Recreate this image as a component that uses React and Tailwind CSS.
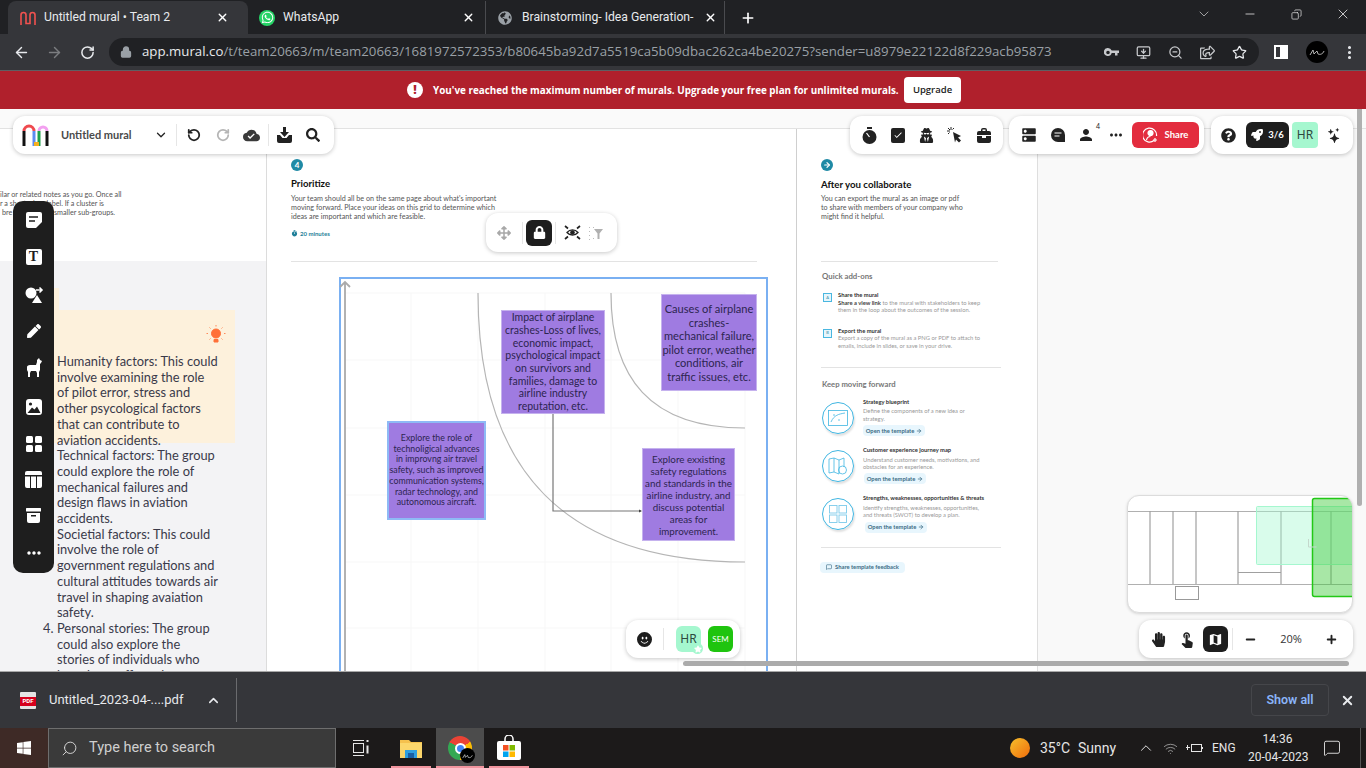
import React from "react";
import { ArrowLeft, ArrowRight, RotateCw, RotateCcw, Lock, MonitorDown, ZoomOut, Star, MoreVertical, X, Plus, ChevronDown, ChevronUp, Minus, Search, Copy, Wifi, MessageSquare, ArrowRight as Arw } from "lucide-react";
import { FaWhatsapp, FaGlobeAmericas, FaWindows, FaUserSecret, FaRocket, FaHandPaper, FaLock, FaArrowsAlt, FaPen, FaSearch, FaQuestionCircle, FaStar, FaRegShareSquare } from "react-icons/fa";
import { MdCloudDone, MdTimer, MdDns, MdPerson, MdMoreHoriz, MdMap, MdTouchApp, MdCheck } from "react-icons/md";
import { BsStars, BsEmojiSmileFill } from "react-icons/bs";

const ui = "font-['Open_Sans','Noto_Sans',sans-serif]";
const tab = "font-['Roboto','Open_Sans',sans-serif]";
const mural = "font-['Lato','Open_Sans',sans-serif]";

const factorLines = [
  "Humanity factors: This could",
  "involve examining the role",
  "of pilot error, stress and",
  "other psycological factors",
  "that can contribute to",
  "aviation accidents.",
  "Technical factors: The group",
  "could explore the role of",
  "mechanical failures and",
  "design flaws in aviation",
  "accidents.",
  "Societial factors: This could",
  "involve the role of",
  "government regulations and",
  "cultural attitudes towards air",
  "travel in shaping avaiation",
  "safety.",
];

function MuralTab() {
  return (
    <svg width="16" height="14" viewBox="0 0 16 14" fill="none" stroke="#f0524f" strokeWidth="1.6">
      <path d="M1 14V4a2.5 2.5 0 0 1 5 0v8.5h4V4a2.5 2.5 0 0 1 5 0v10" />
    </svg>
  );
}

function MuralLogo() {
  return (
    <svg width="27" height="24" viewBox="0 0 27 24" fill="none" strokeWidth="3">
      <path d="M2 23V8" stroke="#111" />
      <path d="M2 8a5 5 0 0 1 10 0" stroke="#ef4a4f" />
      <path d="M12 8v15" stroke="#5c8cf0" />
      <path d="M17 23V8" stroke="#1ea04a" />
      <path d="M17 8a4 4 0 0 1 8 0" stroke="#f3a0f0" />
      <path d="M25 8v15" stroke="#111" />
      <path d="M12 21h5" stroke="#f5b020" strokeWidth="4" />
    </svg>
  );
}

function Bar({ className, children }) {
  return <div className={`absolute flex items-center bg-white rounded-xl shadow-[0_1px_4px_rgba(0,0,0,0.22)] ${className}`}>{children}</div>;
}

function Note({ className, lines }) {
  return (
    <div className={`absolute flex flex-col items-center justify-center text-center whitespace-nowrap bg-[#9f7be1] text-[#2d2550] ${mural} ${className}`}>
      {lines.map((l) => <div key={l}>{l}</div>)}
    </div>
  );
}

function Cell({ className = "", children }) {
  return <div className={`flex items-center justify-center shrink-0 ${className}`}>{children}</div>;
}

function Sep({ className = "" }) {
  return <div className={`w-px h-[22px] bg-[#e6e6e6] shrink-0 ${className}`} />;
}

function Tabs() {
  return (
    <div className={`h-[34px] bg-[#202124] flex items-end text-[12.2px] shrink-0 ${tab}`}>
      <div className="w-2" />
      <div className="w-[240px] h-[33px] bg-[#35363a] rounded-t-lg flex items-center pl-[12px] text-[#e8eaed]">
        <MuralTab />
        <span className="ml-2 w-[172px] truncate">Untitled mural • Team 2</span>
        <X size={13} strokeWidth={2.5} className="text-white" />
      </div>
      <div className="w-[238px] h-[33px] flex items-center pl-[11px] text-[#e8eaed] border-r border-[#4a4b4f]">
        <span className="w-4 h-4 rounded-full bg-[#25d366] flex items-center justify-center"><FaWhatsapp size={13} color="#fff" /></span>
        <span className="ml-2 w-[179px]">WhatsApp</span>
        <X size={13} strokeWidth={2.5} className="text-white" />
      </div>
      <div className="w-[239px] h-[33px] flex items-center pl-[12px] text-[#e8eaed] border-r border-[#4a4b4f]">
        <FaGlobeAmericas size={14} color="#9aa0a6" />
        <span className="ml-[10px] w-[171px] whitespace-nowrap">Brainstorming- Idea Generation-</span>
        <X size={13} strokeWidth={2.5} className="ml-[11px] text-white" />
      </div>
      <div className="ml-[15px] h-[33px] flex items-center"><Plus size={16} strokeWidth={2.5} className="text-white" /></div>
      <div className="flex-1" />
      <div className="h-[34px] flex items-center text-[#e0e0e0] pb-[6px]">
        <ChevronDown size={16} strokeWidth={1} />
        <Minus size={14} strokeWidth={1.4} className="ml-[31px]" />
        <Copy size={11} strokeWidth={1.6} className="ml-[34px] -scale-x-100" />
        <X size={16} strokeWidth={1.3} className="ml-[33px] mr-[15px]" />
      </div>
    </div>
  );
}

function AddressBar() {
  return (
    <div className={`h-[36px] bg-[#35363a] flex items-center shrink-0 text-[#e8eaed] ${ui}`}>
      <ArrowLeft size={17} strokeWidth={2} className="ml-[13px]" />
      <ArrowRight size={17} strokeWidth={2} className="ml-[16px] text-[#7b7d80]" />
      <RotateCw size={15} strokeWidth={2.4} className="ml-[17px]" />
      <div className="ml-[14px] w-[1150px] h-[28px] rounded-full bg-[#202124] flex items-center text-[13.25px]">
        <Lock size={12} strokeWidth={2.6} fill="#9aa0a6" className="ml-[11px] text-[#9aa0a6]" />
        <span className="ml-[10px] whitespace-nowrap w-[950px]">app.mural.co<span className="text-[#9aa0a6]">/t/team20663/m/team20663/1681972572353/b80645ba92d7a5519ca5b09dbac262ca4be20275?sender=u8979e22122d8f229acb95873</span></span>
        <div className="flex items-center text-[#c7c9cc] ml-[12px]">
          <svg width="15" height="9" viewBox="0 0 15 9" fill="#c7c9cc"><path d="M4 0a4 4 0 0 1 3.700 2.500H15V5h-1.500v2.500H11V5H7.700A4 4 0 1 1 4 0zm0 2.700a1.800 1.800 0 1 0 0 3.600 1.800 1.800 0 0 0 0-3.600z" /></svg>
          <MonitorDown size={15} className="ml-[17px]" />
          <ZoomOut size={15} className="ml-[17px]" />
          <FaRegShareSquare size={15} className="ml-[17px]" />
          <Star size={15} className="ml-[17px] text-[#e8eaed]" />
        </div>
      </div>
      <div className="ml-[15px] w-[14px] h-[14px] border-2 border-white flex justify-end"><div className="w-[6px] bg-white" /></div>
      <div className="ml-[18px] w-[22px] h-[22px] rounded-full bg-black flex items-center justify-center">
        <svg width="16" height="8" viewBox="0 0 16 8" fill="none" stroke="#ddd" strokeWidth="0.8"><path d="M1 7 4 2 5 6 8 3 9 6c2 1 5 0 6-3" /></svg>
      </div>
      <MoreVertical size={17} strokeWidth={2.4} className="ml-[13px]" />
    </div>
  );
}

function Banner() {
  return (
    <div className={`h-[39px] bg-[#b0202c] border-t border-[#5e5f63] flex items-center justify-center shrink-0 pl-[2px] ${ui}`}>
      <div className="w-4 h-4 rounded-full bg-white flex items-center justify-center text-[#b0202c] text-[12px] font-extrabold leading-none">!</div>
      <span className="ml-[10px] w-[465px] text-white text-[9.9px] font-bold whitespace-nowrap">You've reached the maximum number of murals. Upgrade your free plan for unlimited murals.</span>
      <div className="ml-[6px] w-[57px] h-[26px] rounded bg-white flex items-center justify-center text-[9.5px] font-semibold text-[#222]">Upgrade</div>
    </div>
  );
}

function AddOn({ letter, title, lead, body1, body2, className = "" }) {
  return (
    <div className={`flex ${className}`}>
      <div className="w-[9px] h-[9px] mt-[2px] border border-[#4ab7e0] bg-[#e6f6fc] flex items-center justify-center text-[4px] text-[#2a7f9e]">{letter}</div>
      <div className="ml-[6px] text-[5.8px] leading-[7.5px]">
        <div className="font-bold text-[#333]">{title}</div>
        <div className="text-[#999] whitespace-nowrap">{lead && <b className="text-[#444]">{lead}</b>}{body1}</div>
        <div className="text-[#999] whitespace-nowrap">{body2}</div>
      </div>
    </div>
  );
}

function TemplateRow({ icon, title, l1, l2, className = "", off = "ml-0" }) {
  return (
    <div className={`flex ${className}`}>
      <div className="w-[32px] h-[32px] rounded-full border-[1.5px] border-[#40b6e2] shadow-[1px_2px_2px_rgba(0,0,0,0.12)] flex items-center justify-center shrink-0 mt-[4px]">{icon}</div>
      <div className="ml-[9px] text-[5.8px] leading-[7.4px] whitespace-nowrap">
        <div className="font-bold text-[#333]">{title}</div>
        <div className="text-[#999] mt-[2px]">{l1}</div>
        <div className="text-[#999]">{l2}</div>
        <div className={`mt-[3px] w-[62px] h-[11px] rounded bg-[#e8f6fd] flex items-center justify-center gap-[2px] font-bold text-[#3d6d86] ${off}`}>Open the template <Arw size={6} strokeWidth={3} /></div>
      </div>
    </div>
  );
}

function LeftTools() {
  return (
    <div className="absolute left-[13px] top-[92px] w-[41px] h-[372px] bg-[#1e1e1e] rounded-[10px] flex flex-col items-center justify-between py-[10px] text-white">
      <svg width="18" height="18" viewBox="0 0 18 18"><path fill="#fff" d="M3 1h12a2 2 0 0 1 2 2v8l-6 6H3a2 2 0 0 1-2-2V3a2 2 0 0 1 2-2z" /><path stroke="#1e1e1e" strokeWidth="1.6" d="M4 6h9M4 10h6" /><path fill="#fff" stroke="#1e1e1e" d="m12 17 5-5" /></svg>
      <div className="w-[16px] h-[16px] bg-white rounded-[2px] flex items-center justify-center text-[#1e1e1e] font-['Liberation_Serif',serif] font-bold text-[14px] leading-none">T</div>
      <svg width="20" height="20" viewBox="0 0 20 20" fill="#fff"><circle cx="7" cy="8" r="5.5" /><path d="m13 10 5 8H8z" /><path d="M12 5h6m-2.500-2.500L18 5l-2.500 2.500" fill="none" stroke="#fff" strokeWidth="1.600" /></svg>
      <FaPen size={14} />
      <svg width="16" height="20" viewBox="0 0 16 20" fill="#fff"><path d="M13 0l1 2 2 1-1 2-1 1v6l-1 2v5h-2v-4l-1-2H5l-1 2v4H2v-5l-1-2V9c0-1 1-2 3-2h6l1-3V2z" /></svg>
      <svg width="18" height="18" viewBox="0 0 18 18"><rect x="1" y="1" width="16" height="16" rx="3" fill="#fff" /><circle cx="5.500" cy="6" r="1.600" fill="#1e1e1e" /><path d="M2.500 15 7 9.500l2.500 2 2.500-3 3.500 6.500z" fill="#1e1e1e" /></svg>
      <svg width="16" height="16" viewBox="0 0 16 16" fill="#fff"><rect width="7" height="7" rx="1.500" /><rect x="9" width="7" height="7" rx="1.500" /><rect y="9" width="7" height="7" rx="1.500" /><rect x="9" y="9" width="7" height="7" rx="1.500" /></svg>
      <svg width="17" height="17" viewBox="0 0 17 17" fill="#fff"><path d="M2 0h13a2 2 0 0 1 2 2v2H0V2a2 2 0 0 1 2-2z" /><path d="M0 5.500h5V17H2a2 2 0 0 1-2-2zM6 5.500h5V17H6zM12 5.500h5V15a2 2 0 0 1-2 2h-3z" /></svg>
      <svg width="15" height="15" viewBox="0 0 15 15" fill="#fff"><rect width="15" height="3.500" rx="0.500" /><path d="M1 5h13v8a2 2 0 0 1-2 2H3a2 2 0 0 1-2-2z" /><rect x="5" y="7" width="5" height="1.500" fill="#1e1e1e" /></svg>
      <MdMoreHoriz size={20} />
    </div>
  );
}

function Frame() {
  const xs = [6, 72, 139, 206, 272, 339, 406];
  const ys = [16, 83, 151, 218, 285, 351];
  return (
    <div className="absolute left-[72px] top-[148px] w-[429px] h-[430px] border-2 border-[#7ab0f2]">
      <svg width="428" height="430" className="absolute -left-[2px] -top-[2px]" fill="none">
        {xs.map((x) => <path key={x} d={`M${x} 16V430`} stroke="#f7f7f7" />)}
        {ys.map((y) => <path key={y} d={`M6 ${y}H406`} stroke="#f7f7f7" />)}
        <path d="M139 16C139 193 225 285 406 285" stroke="#b5b5b5" strokeWidth="1.200" />
        <path d="M272 16C272 101 311 151 406 151" stroke="#b5b5b5" strokeWidth="1.200" />
        <path d="M6 5V430M1 10l5-5 5 5" stroke="#aaa" strokeWidth="1.800" />
        <path d="M214 137V234H302" stroke="#777" strokeWidth="1.200" />
        <path d="M300 232.500l3 1.500-3 1.500z" fill="#444" />
      </svg>
      <Note className="left-[160px] top-[31px] w-[104px] h-[104px] border border-[#c5b2ee] text-[10.5px] leading-[12.7px]" lines={["Impact of airplane", "crashes-Loss of lives,", "economic impact,", "psychological impact", "on survivors and", "families, damage to", "airline industry", "reputation, etc."]} />
      <Note className="left-[320px] top-[15px] w-[96px] h-[97px] border border-[#c5b2ee] text-[11.1px] leading-[13.5px]" lines={["Causes of airplane", "crashes-", "mechanical failure,", "pilot error, weather", "conditions, air", "traffic issues, etc."]} />
      <Note className="left-[46px] top-[142px] w-[99px] h-[99px] border-2 border-[#8ebaf5] text-[8.8px] leading-[10.7px]" lines={["Explore the role of", "technoligical advances", "in improvng air travel", "safety, such as improved", "communication systems,", "radar technology, and", "autonomous aircraft."]} />
      <Note className="left-[301px] top-[169px] w-[93px] h-[93px] border border-[#c5b2ee] text-[9.8px] leading-[12px]" lines={["Explore exxisting", "safety regulations", "and standards in the", "airline industry, and", "discuss potential", "areas for", "improvement."]} />
    </div>
  );
}

function Canvas() {
  return (
    <div className={`relative flex-1 min-h-0 overflow-hidden bg-[#f9f9f9] flex flex-col ${mural}`}>
      <div className="h-5 shrink-0 bg-[#fafafa] border-b border-[#e2e2e2]" />
      <div className="flex-1 flex min-h-0">
        <div className="w-[267px] shrink-0 flex flex-col border-r border-[#dcdcdc]">
          <div className="h-[132px] bg-white pt-[61px] text-[7.2px] leading-[9px] text-[#555] whitespace-nowrap overflow-hidden">
            <div>ilar or related notes as you go. Once all</div>
            <div>r a short, clear label. If a cluster is</div>
            <div className="ml-[2px]">bre it down into smaller sub-groups.</div>
          </div>
          <div className="flex-1 bg-[#f3f3f5] relative">
            <div className="pl-[40px] pt-[27px]">
              <div className="w-[19px] h-[22px] bg-[#fdf1dc]" />
              <div className="w-[195px] h-[133px] bg-[#fdf1dc]" />
            </div>
            <div className="absolute left-[57px] top-[93px] text-[12.85px] leading-[15.7px] text-[#3a3a4a] whitespace-nowrap">
              {factorLines.map((l) => <div key={l}>{l}</div>)}
              <div className="relative"><span className="absolute -left-[14px]">4.</span>Personal stories: The group</div>
              <div>could also explore the</div>
              <div>stories of individuals who</div>
              <div>have been affected</div>
            </div>
            <svg className="absolute left-[206px] top-[64px]" width="20" height="20" viewBox="0 0 20 20" fill="#ff7038" stroke="#ff7038">
              <circle cx="10" cy="8.500" r="4.500" /><path d="M8 14.500h4V17H8z" /><path fill="none" strokeWidth="0.800" d="M10 0v1.500M2 8.500H.5M19.500 8.500H18M3.500 2.500l1 1M16.500 2.500l-1 1M3.500 14.500l1-1M16.500 14.500l-1-1" />
            </svg>
          </div>
        </div>

        <div className="relative w-[530px] shrink-0 bg-white border-r border-[#cfcfcf] pl-6">
          <div className="mt-[30px] w-3 h-3 rounded-full bg-[#1f8aa5] text-white text-[8px] font-bold leading-none flex items-center justify-center">4</div>
          <div className="mt-[7px] text-[9.6px] leading-[12px] font-bold text-[#111]">Prioritize</div>
          <div className="mt-[4px] text-[7.2px] leading-[9px] text-[#555] whitespace-nowrap">
            <div>Your team should all be on the same page about what's important</div>
            <div>moving forward. Place your ideas on this grid to determine which</div>
            <div>ideas are important and which are feasible.</div>
          </div>
          <div className="mt-[8px] flex items-center gap-[2px] text-[6px] leading-[9px] text-[#1f7f99] font-bold"><MdTimer size={7} /> 20 minutes</div>
          <div className="mt-[23px] w-[466px] h-px bg-[#e3e3e3]" />
          <Frame />
          <Bar className="left-[219px] top-[84px] w-[131px] h-[39px]">
            <Cell className="w-[36px] text-[#a8a8a8]"><FaArrowsAlt size={14} /></Cell>
            <Sep />
            <Cell className="ml-[3px] w-[26px] h-[26px] rounded-md bg-[#1e1e1e] text-white"><FaLock size={13} /></Cell>
            <Sep className="ml-[3px]" />
            <Cell className="ml-[5px] w-[22px] text-[#222]">
              <svg width="17" height="15" viewBox="0 0 17 15" fill="none" stroke="#222" strokeWidth="1.300"><path d="M3 7.500c3-3.500 8-3.500 11 0-3 3.500-8 3.500-11 0z" /><circle cx="8.500" cy="7.500" r="1.700" fill="#222" /><path d="M1 1l3 2.500M16 1l-3 2.500M1 14l3-2.500M16 14l-3-2.500" strokeWidth="1.700" /></svg>
            </Cell>
            <Cell className="ml-[3px] w-[18px]">
              <svg width="15" height="14" viewBox="0 0 15 14"><path d="M1 1h1v1H1zM1 5h1v1H1zM1 9h1v1H1zM1 13h1v1H1zM5 1h1v1H5zM5 12h1v1H5z" fill="#bbb" /><path d="M6 3h9l-3.500 4.500V13h-2V7.500z" fill="#b0b0b0" /></svg>
            </Cell>
          </Bar>
          <Bar className="left-[359px] top-[491px] w-[114px] h-[38px]">
            <Cell className="w-[37px] text-[#1e1e1e]"><BsEmojiSmileFill size={15} /></Cell>
            <Sep className="h-[15px]" />
            <div className="relative ml-[12px] w-[25px] h-[26px] rounded-md bg-[#a5f7cf] flex items-center justify-center text-[12px] text-[#2c4a3e] font-['Noto_Sans',sans-serif]">
              HR
              <div className="absolute -right-[2px] -bottom-[2px] w-[11px] h-[11px] rounded-full bg-[#a5f7cf] flex items-center justify-center"><FaStar size={8} color="#fff" /></div>
            </div>
            <div className="ml-[7px] w-[25px] h-[26px] rounded-md bg-[#1fc40f] flex items-center justify-center text-[8px] text-white">SEM</div>
          </Bar>
        </div>

        <div className="w-[241px] shrink-0 bg-white border-r border-[#dedede] pl-[24px]">
          <div className="mt-[30px] w-3 h-3 rounded-full bg-[#1f8aa5] text-white flex items-center justify-center"><Arw size={8} strokeWidth={3.5} /></div>
          <div className="mt-[7px] text-[9.7px] leading-[12px] font-bold text-[#111] whitespace-nowrap">After you collaborate</div>
          <div className="mt-[4px] text-[7.2px] leading-[9px] text-[#555] whitespace-nowrap">
            <div>You can export the mural as an image or pdf</div>
            <div>to share with members of your company who</div>
            <div>might find it helpful.</div>
          </div>
          <div className="mt-[40px] w-[177px] h-px bg-[#e3e3e3]" />
          <div className="mt-[9px] text-[7.8px] leading-[10px] font-bold text-[#777] ml-[1px]">Quick add-ons</div>
          <AddOn className="mt-[10px] ml-[2px]" letter="A" title="Share the mural" lead="Share a view link" body1=" to the mural with stakeholders to keep" body2="them in the loop about the outcomes of the session." />
          <AddOn className="mt-[13px] ml-[2px]" letter="B" title="Export the mural" body1="Export a copy of the mural as a PNG or PDF to attach to" body2="emails, include in slides, or save in your drive." />
          <div className="mt-[18px] w-[180px] h-px bg-[#e3e3e3]" />
          <div className="mt-[11px] ml-[1px] text-[7.7px] leading-[10px] font-bold text-[#777] whitespace-nowrap">Keep moving forward</div>
          <TemplateRow className="mt-[9px] ml-[1px]" title="Strategy blueprint" l1="Define the components of a new idea or" l2="strategy."
            icon={<svg width="20" height="16" viewBox="0 0 20 16" fill="none" stroke="#40b6e2" strokeWidth="0.800"><rect x="0.500" y="0.500" width="19" height="15" /><path d="M3 12c3-7 8-8 14-9M5 5h2M10 10h2" /></svg>} />
          <TemplateRow className="mt-[10px] ml-[1px]" title="Customer experience journey map" l1="Understand customer needs, motivations, and" l2="obstacles for an experience." off="ml-[1px]"
            icon={<svg width="20" height="18" viewBox="0 0 20 18" fill="none" stroke="#40b6e2" strokeWidth="0.800"><path d="M1 2l5-1 5 2 5-2v9M1 2v14l5-1 5 2M6 1v14M11 3v14" /><circle cx="14.500" cy="13" r="4" /></svg>} />
          <TemplateRow className="mt-[10px] ml-[1px]" title="Strengths, weaknesses, opportunities & threats" l1="Identify strengths, weaknesses, opportunities," l2="and threats (SWOT) to develop a plan." off="ml-[2px]"
            icon={<svg width="18" height="18" viewBox="0 0 18 18" fill="none" stroke="#7ccbea" strokeWidth="0.900"><rect x="0.500" y="0.500" width="7.500" height="7.500" /><rect x="10" y="0.500" width="7.500" height="7.500" /><rect x="0.500" y="10" width="7.500" height="7.500" /><rect x="10" y="10" width="7.500" height="7.500" /></svg>} />
          <div className="mt-[14px] w-[180px] h-px bg-[#e3e3e3]" />
          <div className="mt-[14px] -ml-[1px] w-[85px] h-[11px] rounded bg-[#e8f6fd] flex items-center justify-center gap-[3px] text-[5.8px] font-bold text-[#3d6d86] whitespace-nowrap"><MessageSquare size={6} strokeWidth={2.5} /> Share template feedback</div>
        </div>
        <div className="flex-1" />
      </div>

      <Bar className="left-[13px] top-[7px] w-[321px] h-[38px]">
        <div className="ml-[9px] w-[27px] flex"><MuralLogo /></div>
        <span className="ml-[12px] w-[93px] text-[11px] font-bold text-[#4a4a4a] whitespace-nowrap">Untitled mural</span>
        <ChevronDown size={14} strokeWidth={2.2} className="text-[#222]" />
        <Sep className="ml-[8px]" />
        <Cell className="ml-[2px] w-[30px]"><RotateCcw size={14} strokeWidth={3} color="#222" /></Cell>
        <Cell className="w-[27px]"><RotateCw size={14} strokeWidth={3} color="#b5b5b5" /></Cell>
        <Cell className="w-[31px]"><MdCloudDone size={17} color="#3a3a3a" /></Cell>
        <Sep className="ml-[1px]" />
        <Cell className="w-[30px]">
          <svg width="15" height="16" viewBox="0 0 15 16" fill="#222"><path d="M6 0h3v5h3L7.500 10 3 5h3z" /><path d="M0 8h3l2.500 3h4L12 8h3v6a2 2 0 0 1-2 2H2a2 2 0 0 1-2-2z" /></svg>
        </Cell>
        <Cell className="w-[28px]"><FaSearch size={14} color="#222" /></Cell>
      </Bar>

      <Bar className="left-[850px] top-[7px] w-[153px] h-[38px] justify-between pl-[12px] pr-[12px] text-[#222]">
        <svg width="15" height="17" viewBox="0 0 15 17" fill="#222"><rect x="5" width="5" height="2" /><circle cx="7.500" cy="10" r="7" /><path d="M7.500 10 4.500 6" stroke="#fff" strokeWidth="1.200" /></svg>
        <div className="w-[14px] h-[15px] rounded-[2px] bg-[#222] flex items-center justify-center"><MdCheck size={10} color="#fff" /></div>
        <FaUserSecret size={15} />
        <svg width="16" height="16" viewBox="0 0 16 16" fill="#222"><path d="M6 5l8 4-3 1.500 3 3-2 2-3-3-1 3z" /><path d="M4 0v3M0 4h3M1 1l2 2M7 1 5.500 2.500M1 7l1.500-1.500" stroke="#222" strokeWidth="1" /></svg>
        <svg width="14" height="15" viewBox="0 0 14 15" fill="#222"><path d="M4 3V2a2 2 0 0 1 2-2h2a2 2 0 0 1 2 2v1h2a2 2 0 0 1 2 2v2H0V5a2 2 0 0 1 2-2zm1.500 0h3V1.500h-3zM0 8h5v2h4V8h5v5a2 2 0 0 1-2 2H2a2 2 0 0 1-2-2z" /></svg>
      </Bar>

      <Bar className="left-[1009px] top-[7px] w-[195px] h-[38px] text-[#222]">
        <Cell className="w-[40px]"><MdDns size={18} /></Cell>
        <Cell className="w-[17px]">
          <svg width="14" height="14" viewBox="0 0 14 14" fill="#222"><path d="M7 0a7 7 0 0 1 7 7v7H7A7 7 0 0 1 7 0z" /><path d="M3.500 5h7M3.500 8h5" stroke="#fff" strokeWidth="1.200" /></svg>
        </Cell>
        <Cell className="relative ml-[11px] w-[18px]"><MdPerson size={20} /><span className="absolute -right-[5px] -top-[2px] text-[7px] leading-none">4</span></Cell>
        <Cell className="ml-[11px] w-[20px]"><MdMoreHoriz size={18} /></Cell>
        <div className="ml-[6px] w-[67px] h-[26px] rounded-md bg-[#e32c3e] flex items-center justify-center gap-[7px] text-white text-[9.5px] font-bold">
          <svg width="15" height="16" viewBox="0 0 15 16" fill="none" stroke="#fff" strokeWidth="1.200"><path d="M11 13.500A7 7 0 1 1 13.500 9" /><circle cx="7.500" cy="6" r="2.500" fill="#fff" /><path d="M3.500 13c.5-2.500 2-3.500 4-3.500" /><path d="M12 11v4M10 13h4" /></svg>
          Share
        </div>
      </Bar>

      <Bar className="left-[1211px] top-[7px] w-[142px] h-[38px] text-[#222]">
        <Cell className="w-[35px]"><FaQuestionCircle size={15} /></Cell>
        <div className="w-[43px] h-[26px] rounded-md bg-[#1e1e1e] text-white flex items-center justify-center gap-[5px] text-[9.5px] font-bold"><FaRocket size={12} />3/6</div>
        <div className="ml-[3px] w-[26px] h-[26px] rounded bg-[#a5f7cf] flex items-center justify-center text-[12px] text-[#2c4a3e] font-['Noto_Sans',sans-serif]">HR</div>
        <Cell className="ml-[3px] w-[26px]"><BsStars size={15} /></Cell>
      </Bar>

      <LeftTools />

      <div className="absolute left-[1127px] top-[386px] w-[226px] h-[118px] bg-white rounded-xl border border-[#dcdcdc] shadow-[0_1px_3px_rgba(0,0,0,0.15)] overflow-hidden">
        <svg width="226" height="118" fill="none" className="absolute left-0 top-0">
          <path d="M0 15.500H226M0 88.500H226" stroke="#b0b0b0" />
          <path d="M22 15V88M45 15V88M68 15V88M110 15V88M153 15V88M203 15V88" stroke="#a0a0a0" strokeWidth="1.200" />
          <path d="M110 76.500H153" stroke="#a0a0a0" />
          <rect x="47.500" y="90.500" width="23" height="13" stroke="#999" />
          <rect x="128.500" y="10.500" width="110" height="58" rx="1" fill="#a5f7cf" fillOpacity="0.42" stroke="#a5f7cf" />
          <rect x="184.500" y="2.500" width="60" height="98" rx="2" fill="#3fc93a" fillOpacity="0.45" stroke="#22c816" strokeWidth="1.500" />
          <path d="M180.500 43v8h8" stroke="#c4d8cc" />
        </svg>
      </div>
      <Bar className="left-[1139px] top-[511px] w-[214px] h-[38px] text-[#222]">
        <Cell className="w-[38px]"><FaHandPaper size={15} /></Cell>
        <Cell className="w-[20px]"><MdTouchApp size={18} /></Cell>
        <Cell className="ml-[6px] w-[25px] h-[26px] rounded-md bg-[#1e1e1e] text-white"><MdMap size={15} /></Cell>
        <Sep className="ml-[4px] h-[15px]" />
        <Cell className="ml-[7px] w-[20px]"><Minus size={13} strokeWidth={3.5} /></Cell>
        <span className="ml-[11px] w-[40px] text-center text-[11px] text-[#333] font-['Open_Sans',sans-serif]">20%</span>
        <Cell className="ml-[10px] w-[20px]"><Plus size={13} strokeWidth={3.5} /></Cell>
      </Bar>

      <div className="absolute right-[4px] top-0 w-[5px] h-[397px] rounded-b-full bg-[#b0b0b0]" />
      <div className="absolute left-[683px] bottom-[5px] w-[666px] h-[5px] rounded-full bg-[#ababab]" />
    </div>
  );
}

function DownloadBar() {
  return (
    <div className={`h-[57px] bg-[#35363a] border-t border-[#a8a8a8] flex items-center shrink-0 ${tab}`}>
      <div className="ml-[20px] w-[16px] h-[17px] bg-[#e4e4e4] rounded-[1px] flex items-center">
        <div className="w-full h-[9px] mt-[2px] bg-[#d5001c] flex items-center justify-center text-white text-[6px] font-bold leading-none">PDF</div>
      </div>
      <span className="ml-[13px] w-[157px] text-[13px] text-[#e8eaed] whitespace-nowrap">Untitled_2023-04-....pdf</span>
      <ChevronUp size={15} strokeWidth={2.5} className="text-[#e8eaed] mr-[15px]" />
      <div className="w-px h-[44px] bg-[#6a6b6e]" />
      <div className="flex-1" />
      <div className="w-[78px] h-[32px] rounded border border-[#45464a] flex items-center justify-center text-[12.5px] font-semibold text-[#8ab4f8]">Show all</div>
      <X size={15} strokeWidth={3} className="ml-[11px] mr-[11px] text-[#e8eaed]" />
    </div>
  );
}

function Taskbar() {
  return (
    <div className={`relative h-[40px] bg-[#1c1a1a] flex items-center shrink-0 text-[#e6e6e6] ${tab}`}>
      <div className="w-[48px] h-full bg-[#3e2a26] flex items-center justify-center"><FaWindows size={16} color="#fff" /></div>
      <div className="w-[288px] h-full bg-[#3a3a3a] border border-[#6e6e6e] flex items-center">
        <Search size={17} strokeWidth={1.3} className="ml-[12px] -scale-x-100 text-[#ddd]" />
        <span className="ml-[11px] text-[14.5px] text-[#cfcfcf] whitespace-nowrap">Type here to search</span>
      </div>
      <svg className="ml-[16px]" width="18" height="18" viewBox="0 0 18 18" fill="none" stroke="#e6e6e6"><rect x="1.500" y="4.500" width="10" height="9" /><path d="M1 1.500h11M1 16.500h11" /><path d="M15.500 1v2M15.500 6.500v8" strokeWidth="2" /></svg>
      <div className="ml-[21px] w-[40px] flex justify-center">
        <svg width="22" height="20" viewBox="0 0 22 20"><path d="M0 2h9l2 2h11v16H0z" fill="#f5c14e" /><rect y="5" width="22" height="15" fill="#fbd66b" /><rect x="5" y="12" width="12" height="8" fill="#2f9fe0" /><rect x="8" y="15" width="6" height="5" fill="#1a5fa5" /></svg>
      </div>
      <div className="ml-[5px] w-[48px] h-full bg-[#4c4c4c] flex items-center justify-center">
        <div className="relative w-[24px] h-[24px] rounded-full bg-[conic-gradient(from_-60deg,#ea4335_0_33.3%,#fbbc05_33.3%_66.6%,#34a853_66.6%_100%)] flex items-center justify-center">
          <div className="w-[11px] h-[11px] rounded-full bg-[#4285f4] border-2 border-white" />
          <div className="absolute -right-[3px] -bottom-[3px] w-[15px] h-[15px] rounded-full bg-black flex items-center justify-center">
            <svg width="11" height="6" viewBox="0 0 16 8" fill="none" stroke="#ddd" strokeWidth="1"><path d="M1 7 4 2 5 6 8 3 9 6c2 1 5 0 6-3" /></svg>
          </div>
        </div>
      </div>
      <div className="ml-[5px] w-[40px] flex justify-center">
        <svg width="24" height="26" viewBox="0 0 24 26"><path d="M8 7V4a4 4 0 0 1 8 0v3" fill="none" stroke="#fff" strokeWidth="1.500" /><rect y="6" width="24" height="19" rx="2" fill="#fff" /><rect x="6" y="10" width="5.500" height="5.500" fill="#f25022" /><rect x="12.500" y="10" width="5.500" height="5.500" fill="#7fba00" /><rect x="6" y="16.500" width="5.500" height="5.500" fill="#00a4ef" /><rect x="12.500" y="16.500" width="5.500" height="5.500" fill="#ffb900" /></svg>
      </div>
      <div className="flex-1" />
      <div className="w-5 h-5 rounded-full bg-[linear-gradient(135deg,#f7c02c,#ef6c0c)]" />
      <span className="ml-[10px] w-[38px] text-[14px] whitespace-nowrap">35°C</span>
      <span className="text-[14px] w-[44px]">Sunny</span>
      <ChevronUp size={18} strokeWidth={1.3} className="ml-[15px]" />
      <Wifi size={15} strokeWidth={1.3} className="ml-[8px] text-[#aaa]" />
      <svg className="ml-[8px]" width="17" height="12" viewBox="0 0 17 12" fill="none" stroke="#e6e6e6"><rect x="5.500" y="2.500" width="10" height="7" /><path d="M16.500 5v2M0 5.500h4M1.500 3v5" /></svg>
      <span className="ml-[9px] w-[25px] text-[12px]">ENG</span>
      <div className="ml-[11px] w-[59px] text-center text-[12px] leading-[18px] whitespace-nowrap">14:36<br />20-04-2023</div>
      <MessageSquare size={18} strokeWidth={1.2} className="ml-[16px]" />
      <div className="ml-[19px] w-px h-full bg-[#555]" />
      <div className="w-[5px]" />
      <div className="absolute left-[391px] bottom-0 w-[40px] h-[2px] bg-[#f1949e]" />
      <div className="absolute left-[436px] bottom-0 w-[48px] h-[2px] bg-[#f1949e]" />
      <div className="absolute left-[489px] bottom-0 w-[40px] h-[2px] bg-[#f1949e]" />
    </div>
  );
}

export default function App() {
  return (
    <div className="w-[1366px] h-[768px] overflow-hidden flex flex-col">
      <Tabs />
      <AddressBar />
      <Banner />
      <Canvas />
      <DownloadBar />
      <Taskbar />
    </div>
  );
}
